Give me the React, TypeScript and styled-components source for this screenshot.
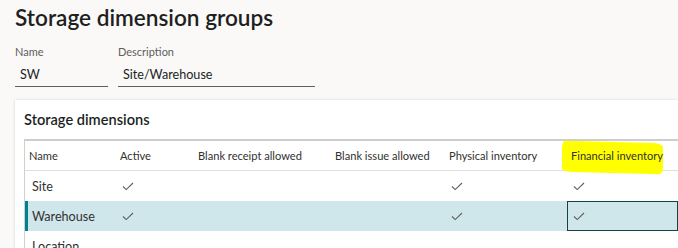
import styled, { createGlobalStyle } from 'styled-components';

const GlobalStyle = createGlobalStyle`
  body {
    margin: 0;
    background: #faf9f8;
    font-family: Lato, "Noto Sans", sans-serif;
    color: #201f1e;
    overflow: hidden;
  }
`;

const Page = styled.div`
  padding: 3px 0 0 15px;
  height: 248px;
  box-sizing: border-box;
  overflow: hidden;
`;

const Title = styled.h1`
  margin: 0;
  font-size: 22.6px;
  font-weight: 600;
  line-height: 30px;
  color: #201f1e;
`;

const Fields = styled.div`
  display: flex;
  gap: 10px;
  margin-top: 12px;
`;

const Field = styled.div<{ $width: number }>`
  display: flex;
  flex-direction: column;
  width: ${({ $width }) => $width}px;
`;

const Label = styled.label`
  font-size: 11px;
  line-height: 14px;
  color: #605e5c;
`;

const Input = styled.div`
  font-size: 12.6px;
  line-height: 18px;
  padding: 7px 5px 2px;
  border-bottom: 1px solid #605e5c;
  color: #201f1e;
`;

const Card = styled.section`
  margin-top: 13px;
  background: #fff;
  box-shadow: 0 0 2px rgba(0, 0, 0, 0.12), 0 1px 3px rgba(0, 0, 0, 0.08);
  padding: 0 0 0 9px;
`;

const CardHeader = styled.h2`
  margin: 0;
  font-size: 14.6px;
  font-weight: 600;
  line-height: 39px;
  color: #201f1e;
`;

const Grid = styled.div`
  display: grid;
  grid-template-columns: 91px 78px 137px 114px 122px 1fr;
  border-top: 2px solid #cfcdcb;
  border-left: 1px solid #d2d0ce;
`;

const HeadCell = styled.div<{ $marked?: boolean }>`
  height: 29px;
  display: flex;
  align-items: center;
  padding-left: 4px;
  font-size: 11.1px;
  white-space: nowrap;
  color: #323130;
  border-bottom: 1px solid #e1dfdd;
  position: relative;
  ${({ $marked }) =>
    $marked &&
    `
    &::before {
      content: '';
      position: absolute;
      left: -5px;
      top: 1px;
      width: 101px;
      height: 31px;
      background: #ffff00;
      border-radius: 3px 9px 4px 12px / 8px 4px 6px 3px;
      transform: skewY(1.5deg);
    }
    span { position: relative; }
  `}
`;

const Row = styled.div<{ $selected?: boolean }>`
  display: contents;
  & > div {
    background: ${({ $selected }) => ($selected ? '#cfe6ea' : '#fff')};
  }
`;

const Cell = styled.div<{ $focused?: boolean }>`
  height: 30px;
  display: flex;
  align-items: center;
  padding-left: 4px;
  font-size: 12.6px;
  color: #323130;
  box-sizing: border-box;
  ${({ $focused }) => $focused && 'outline: 1px solid #1b3f47; outline-offset: -1px;'}
`;

const NameCell = styled(Cell)<{ $accent?: boolean }>`
  padding-left: ${({ $accent }) => ($accent ? '4px' : '7px')};
  border-left: ${({ $accent }) => ($accent ? '3px solid #00838f' : 'none')};
`;

const CheckBox = styled.span`
  display: inline-flex;
  width: 16px;
  justify-content: center;
`;

const Check = () => (
  <CheckBox>
    <svg width="12" height="9" viewBox="0 0 12 9">
      <polyline points="1,4.5 4.2,7.6 11,1" fill="none" stroke="#605e5c" strokeWidth="1.1" />
    </svg>
  </CheckBox>
);

const columns = [
  'Name',
  'Active',
  'Blank receipt allowed',
  'Blank issue allowed',
  'Physical inventory',
  'Financial inventory',
];

const rows = [
  { name: 'Site', active: true, phys: true, fin: true },
  { name: 'Warehouse', active: true, phys: true, fin: true, selected: true },
  { name: 'Location', active: false, phys: false, fin: false },
];

const App = () => (
  <>
    <GlobalStyle />
    <Page>
      <Title>Storage dimension groups</Title>
      <Fields>
        <Field $width={93}>
          <Label>Name</Label>
          <Input>SW</Input>
        </Field>
        <Field $width={197}>
          <Label>Description</Label>
          <Input>Site/Warehouse</Input>
        </Field>
      </Fields>
      <Card>
        <CardHeader>Storage dimensions</CardHeader>
        <Grid>
          {columns.map((c, i) => (
            <HeadCell key={c} $marked={i === 5}>
              <span>{c}</span>
            </HeadCell>
          ))}
          {rows.map((r) => (
            <Row key={r.name} $selected={r.selected}>
              <NameCell $accent={r.selected}>{r.name}</NameCell>
              <Cell>{r.active && <Check />}</Cell>
              <Cell />
              <Cell />
              <Cell>{r.phys && <Check />}</Cell>
              <Cell $focused={r.selected}>{r.fin && <Check />}</Cell>
            </Row>
          ))}
        </Grid>
      </Card>
    </Page>
  </>
);

export default App;
